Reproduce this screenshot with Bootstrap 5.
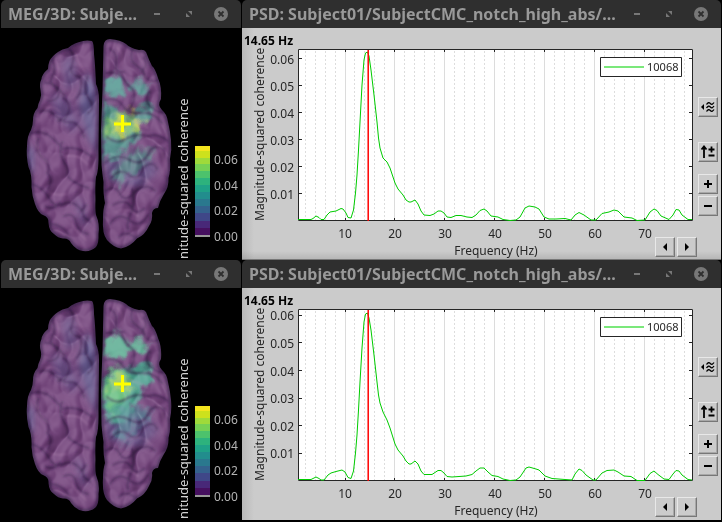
<!DOCTYPE html>
<html lang="en">
<head>
<meta charset="utf-8">
<meta name="viewport" content="width=device-width, initial-scale=1">
<title>Coherence results</title>
<link rel="stylesheet" href="https://cdn.jsdelivr.net/npm/bootstrap@5.3.0/dist/css/bootstrap.min.css">
<style>
body { background:#000; font-family:"Noto Sans","Open Sans",sans-serif; font-size:12px; line-height:16px; color:#262626; }
.desk { display:grid; grid-template-columns:240px minmax(0,1fr); column-gap:1px; padding:0 1px 2px; }
.win { min-height:260px; }
.titlebar { height:28px; background:#2f2f2f; border-radius:5px 5px 0 0; padding:0 4px 0 7px; }
.titlebar h2 { font-size:16px; line-height:28px; font-weight:700; color:#999; }
.winbtn { width:32px; height:28px; border:0; background:none; padding:0; }
.winbtn svg, .tool svg, .scene, .plot { display:block; }
.winbtn svg { margin:auto; }
.scene { width:100%; height:auto; background:#000; }
.psd { background:linear-gradient(90deg,#b8b8b8,#cbcbcb 12px); }
.psd-top { background-image:linear-gradient(0deg,rgba(0,0,0,.1),transparent 8px),linear-gradient(90deg,#b8b8b8,#cbcbcb 12px); border-bottom:1px solid #777; }
.freq { height:19px; line-height:16px; padding:5px 0 0 2px; font-weight:700; color:#000; }
.plot { width:100%; height:auto; overflow:visible; }
.plot text, .scene text { font-family:"Noto Sans","Open Sans",sans-serif; font-size:12px; }
.plot text { fill:#262626; }
.plot .key { font-size:11px; }
.scene text { fill:#b3b3b3; }
.scene .barname { font-size:13px; fill:#d0d0d0; }
.axisrow { padding-left:97px; padding-right:1px; gap:2px; height:22px; }
.axisname { padding-top:6px; }
.tools { width:23px; padding:69px 3px 0 0; gap:12px; }
.zoomers { gap:2px; }
.tools > .tool:first-child { margin-bottom:13px; }
.tool { width:20px; height:20px; padding:0; background:#cbcbcb; border:1px solid; border-color:#e8e8e8 #777 #777 #e8e8e8; box-shadow:inset -1px -1px #a8a8a8; display:flex; flex-shrink:0; align-items:center; justify-content:center; border-radius:0; }
</style>
<script src="https://cdn.jsdelivr.net/npm/bootstrap@5.3.0/dist/js/bootstrap.bundle.min.js"></script>
</head>
<body>
<svg width="0" height="0" class="position-absolute" aria-hidden="true">
<defs>
<symbol id="i-min" viewBox="0 0 16 16"><path d="M5 8h6" stroke="#777" stroke-width="2"/></symbol>
<symbol id="i-max" viewBox="0 0 16 16"><path d="M7 5h4v4zM5 7v4h4z" fill="#777"/></symbol>
<symbol id="i-close" viewBox="0 0 16 16"><circle cx="8" cy="8" r="7" fill="#777"/><path d="M5.500 5.500l5 5m0-5l-5 5" stroke="#2f2f2f" stroke-width="1.800"/></symbol>
<symbol id="i-smooth" viewBox="0 0 16 16"><path d="M4 5v6L1 8z"/><path d="M6.500 5.500q2-3 3.800-1T14 3.500M6.500 9q2-3 3.800-1T14 7M6.500 12.500q2-3 3.800-1T14 10.500" fill="none" stroke="#000" stroke-width="1.300"/></symbol>
<symbol id="i-scale" viewBox="0 0 16 16"><path d="M4 14V3M1.500 5.500L4 2.500l2.500 3M8.500 5.500h6M11.500 2.500v6M8.500 11.500h6" fill="none" stroke="#000" stroke-width="1.800"/></symbol>
<symbol id="i-plus" viewBox="0 0 16 16"><path d="M4 8h8M8 4v8" stroke="#000" stroke-width="2"/></symbol>
<symbol id="i-minus" viewBox="0 0 16 16"><path d="M4 8h8" stroke="#000" stroke-width="2"/></symbol>
<symbol id="i-prev" viewBox="0 0 16 16"><path d="M10 4v8L6 8z"/></symbol>
<symbol id="i-next" viewBox="0 0 16 16"><path d="M6 4v8l4-4z"/></symbol>

<path id="hemL" d="M92 41Q87 40 83 41Q78 42 75 43.500Q71 45 68 48Q62 49 58 52Q52 56 49.500 61Q48 65 48 69Q42 74 41.500 79Q39 84 40.500 90Q42 95 40 100Q38 104 37.500 108Q33 113 33 120Q33 125 31 130Q27 136 27 146Q26 156 28.500 167Q32 174 31.500 187Q32 196 35 204Q38 213 43 215Q49 217 48.500 223Q49 231 54 234Q58 238 63 238.500Q69 238 71 243Q76 250 83 251Q91 252 96 247Q99 243 98.500 234Q100 224 96 215Q95 209 95.500 200Q95 185 96 177Q99 171 98.500 150L99 100Q99 90 96 84Q95 62 94 54Q94 43 92 41Z"/>
<path id="hemR" d="M110 39Q104 39 103.500 46L102.500 90L101 130L101.500 165Q102 172 103.500 182Q103 194 105 203Q103 209 103 218Q102 234 107 240Q113 247 121 248.500Q130 247 137 238.500Q145 235 149 226Q153 220 152 213Q153 208 158 208Q160 200 164 194Q169 187 168.500 178Q171 170 170 159Q172 150 171 140Q170 130 168 122Q167 114 162 110Q157 105 161 99Q162 87 158 78Q155 68 152 66Q149 60 146 52Q144 49 139 50Q130 48 126 44Q121 40 110 39Z"/>
<clipPath id="brainClip"><use href="#hemL"/><use href="#hemR"/></clipPath>
<clipPath id="rightClip"><use href="#hemR"/></clipPath>
<filter id="soft1" x="-20%" y="-20%" width="140%" height="140%"><feGaussianBlur stdDeviation="1"/></filter>
<filter id="soft3" x="-20%" y="-20%" width="140%" height="140%"><feGaussianBlur stdDeviation="3"/></filter>
<filter id="patch" x="-20%" y="-20%" width="140%" height="140%"><feGaussianBlur stdDeviation="2.500" result="b"/><feTurbulence type="fractalNoise" baseFrequency="0.09" numOctaves="2" seed="4" result="n"/><feDisplacementMap in="b" in2="n" scale="18" xChannelSelector="R" yChannelSelector="G"/></filter>
<filter id="folds" x="0" y="0" width="100%" height="100%" color-interpolation-filters="sRGB"><feTurbulence type="turbulence" baseFrequency="0.036 0.026" numOctaves="2" seed="11"/><feGaussianBlur stdDeviation="1"/><feDiffuseLighting surfaceScale="12" diffuseConstant="0.950" lighting-color="#fff"><feDistantLight azimuth="225" elevation="62"/></feDiffuseLighting></filter>

<g id="brainBase">
  <rect x="20" y="34" width="160" height="222" fill="#6f4277"/>
  <g filter="url(#soft3)" fill="#5f598b">
    <path d="M86 72L96 84V155L86 132L78 104Z" opacity=".85"/>
    <path d="M52 92L68 100L80 124L72 133L54 114Z" opacity=".45"/>
    <path d="M26 143L33 150L33 173L28 170Z"/>
    <path d="M62 62L72 54L78 82L66 91Z" opacity=".5"/>
    <path d="M104 160L145 152L158 171L140 188L108 180Z" opacity=".6"/>
    <path d="M74 195L83 202L89 224L80 226Z" opacity=".35"/>
  </g>
</g>
<g id="brainShade">
  <g fill="none" stroke="#2e1740" stroke-width="2.200" stroke-linecap="round" filter="url(#soft1)" opacity=".55">
    <path d="M52 60Q57 70 52 77T58 88L64 95M69 49Q76 55 72 65T80 77Q84 87 77 98M45 83Q55 82 58 91T48 101M40 112Q48 108 56 116T73 122Q81 126 84 137M88 76Q82 90 89 99T88 113M63 98Q71 102 69 111T58 121M31 133Q43 130 51 137T63 149Q76 145 91 156M38 139Q34 151 43 158T47 173Q54 179 48 189M62 142Q58 154 64 162T68 177Q76 185 89 188M31 184Q43 187 49 198T66 203Q77 201 83 213M46 207Q54 210 60 203M64 216Q74 212 76 222T88 234M86 205Q78 216 90 221M52 224Q62 225 68 234"/>
    <path d="M110 49Q118 53 116 63T124 72M132 50Q129 61 137 66T145 77Q151 83 158 80M106 73Q118 71 123 78T134 91Q136 103 128 110M144 58Q148 66 142 72M150 91Q143 99 150 106T163 112M105 100Q118 97 123 106T143 113Q154 112 162 123M107 137Q117 145 126 139T148 136Q158 133 168 141M105 163Q117 152 130 160T150 150Q155 145 164 149M111 178Q120 167 129 175T144 167Q153 160 157 169M105 191Q115 184 120 194T137 190Q147 183 155 191M113 205Q126 198 131 207T144 209M110 224Q118 211 129 220T148 215M119 237Q127 230 134 237M132 189Q136 202 131 213T128 229"/>
  </g>
  <g fill="none" stroke="#b887b3" stroke-width="1.200" stroke-linecap="round" filter="url(#soft1)" opacity=".4">
    <path d="M56 62Q61 72 56 78M76 53Q78 63 85 72M45 108Q52 104 60 112M36 144Q40 157 48 163M65 157Q78 152 88 165M50 193Q58 196 67 194M72 224Q78 234 86 240M117 47Q124 54 122 64M140 58Q148 68 146 82M126 119Q140 122 148 128M125 181Q140 174 149 182M116 212Q127 206 138 216M157 144Q166 154 163 174"/>
  </g>
  <rect x="20" y="34" width="160" height="222" filter="url(#folds)" style="mix-blend-mode:soft-light" opacity=".45"/>
  <g fill="none" stroke="#28133a" stroke-width="5" opacity=".5" filter="url(#soft1)"><use href="#hemL"/><use href="#hemR"/></g>
</g>
<g id="cross"><path d="M114 124H131M122.500 115V132" fill="none" stroke="#ff0" stroke-width="3"/></g>
<g id="colorbar" shape-rendering="crispEdges">
  <path d="M195 146h15v5h-15z" fill="#f4e51e"/><path d="M195 151h15v7h-15z" fill="#cde11d"/><path d="M195 158h15v6h-15z" fill="#9fda3a"/><path d="M195 164h15v7h-15z" fill="#75d054"/><path d="M195 171h15v7h-15z" fill="#4cc26c"/><path d="M195 178h15v7h-15z" fill="#2db27d"/><path d="M195 185h15v7h-15z" fill="#1fa187"/><path d="M195 192h15v7h-15z" fill="#228d8d"/><path d="M195 199h15v7h-15z" fill="#2a788e"/><path d="M195 206h15v7h-15z" fill="#34618d"/><path d="M195 213h15v8h-15z" fill="#3f4788"/><path d="M195 221h15v7h-15z" fill="#482878"/><path d="M195 228h15v7h-15z" fill="#46105f"/><path d="M195 235h15v2h-15z" fill="#999"/>
</g>
<g id="grid" fill="none" stroke="#ddd">
  <path fill="#fff" stroke="none" d="M298 49h395v172H298z"/>
  <path stroke="#dcdcdc" d="M345.500 50V220M394.500 50V220M444.500 50V220M494.500 50V220M544.500 50V220M594.500 50V220M644.500 50V220"/>
  <path stroke-dasharray="2 2" d="M305.500 51V220M315.500 51V220M325.500 51V220M335.500 51V220M354.500 51V220M364.500 51V220M374.500 51V220M384.500 51V220M404.500 51V220M414.500 51V220M424.500 51V220M434.500 51V220M454.500 51V220M464.500 51V220M474.500 51V220M484.500 51V220M504.500 51V220M514.500 51V220M524.500 51V220M534.500 51V220M554.500 51V220M564.500 51V220M574.500 51V220M584.500 51V220M604.500 51V220M614.500 51V220M624.500 51V220M634.500 51V220M654.500 51V220M664.500 51V220M674.500 51V220M684.500 51V220"/>
  <path stroke="#262626" d="M298.500 49.500H692.500V220.500H298.500zM345.500 49v3m0 166v3M394.500 49v3m0 166v3M444.500 49v3m0 166v3M494.500 49v3m0 166v3M544.500 49v3m0 166v3M594.500 49v3m0 166v3M644.500 49v3m0 166v3"/>
</g>
</defs>
</svg>

<main class="desk">
  <section class="win" aria-label="MEG 3D view, first">
    <header class="titlebar d-flex align-items-center">
      <h2 class="m-0 flex-grow-1 text-nowrap">MEG/3D: Subje...</h2>
      <button class="winbtn" aria-label="Minimize"><svg width="16" height="16"><use href="#i-min"/></svg></button>
      <button class="winbtn" aria-label="Maximize"><svg width="16" height="16"><use href="#i-max"/></svg></button>
      <button class="winbtn" aria-label="Close"><svg width="16" height="16"><use href="#i-close"/></svg></button>
    </header>
    <svg class="scene" viewBox="1 28 240 232" role="img" aria-label="Cortex coherence map">
      <g clip-path="url(#brainClip)">
        <use href="#brainBase"/>
        <g clip-path="url(#rightClip)"><g filter="url(#patch)">
          <path fill="#51938d" d="M103 78L121 76L125 91L116 98L103 90Z"/>
          <path fill="#548d8c" d="M130 84L146 80L148 92L134 96Z"/>
          <path fill="#4f9a8d" d="M102 101L117 108L115 118L132 117L146 104L153 116L139 128L132 147L118 155L102 163Z" opacity=".85"/>
          <path fill="#559387" d="M122 158L149 148L154 160L136 168L120 188L113 177Z" opacity=".65"/>
          <path fill="#73b76f" d="M106 116L117 112L137 118L133 131L115 143L105 132Z" opacity=".85"/>
          <path fill="#c2cf4e" d="M113 120L121 117L125 127L119 134L113 131ZM134 121L140 119L142 126L134 131ZM129 111L138 108L134 115Z"/>
          <path fill="#d9d33a" d="M116 133L126 130L121 138Z"/>
        </g></g>
        <use href="#brainShade"/>
      </g>
      <use href="#cross"/><use href="#colorbar"/>
      <text class="barname" transform="translate(188 259) rotate(-90)">nitude-squared coherence</text>
      <text x="214" y="164">0.06</text><text x="214" y="190">0.04</text><text x="214" y="215">0.02</text><text x="214" y="241">0.00</text>
    </svg>
  </section>

  <section class="win d-flex flex-column" aria-label="PSD view, first">
    <header class="titlebar d-flex align-items-center">
      <h2 class="m-0 flex-grow-1 text-nowrap">PSD: Subject01/SubjectCMC_notch_high_abs/...</h2>
      <button class="winbtn" aria-label="Minimize"><svg width="16" height="16"><use href="#i-min"/></svg></button>
      <button class="winbtn" aria-label="Maximize"><svg width="16" height="16"><use href="#i-max"/></svg></button>
      <button class="winbtn" aria-label="Close"><svg width="16" height="16"><use href="#i-close"/></svg></button>
    </header>
    <div class="psd psd-top d-flex flex-grow-1">
      <div class="flex-grow-1">
        <div class="freq">14.65 Hz</div>
        <svg class="plot" viewBox="242 47 456 190" role="img" aria-label="Magnitude-squared coherence by frequency">
          <use href="#grid"/>
          <path stroke="#262626" d="M298 58.500h4m387 0h4M298 85.500h4m387 0h4M298 112.500h4m387 0h4M298 139.500h4m387 0h4M298 166.500h4m387 0h4M298 193.500h4m387 0h4"/>
          <polyline fill="none" stroke="#0c0" points="298,219.500 311,219.500 313,218.500 316,216 319,217.500 321,219.500 324,219.500 327,215 330,212 336,211 341,208.500 343,209 346,213 348,217.500 351,218 353.500,210 355.500,193 357,175 358.500,150 360,122 362,85 364,60 365.500,53 367.500,52 369,56 371,70 374,95 377,122 378.500,138 380,148 383,158 387,162 390,168 395,183 398,189 403,195 406,200 409,202 411,202 415,200 418,204 421,211 424,215 430,215.500 434,214 438,211 441,211 444,213 447,217 451,217.500 456,215.500 461,215.500 467,217 472,217.500 476,215 480,210.500 484,209 487,211 491,216 498,217 503,219.500 510,220.500 516,220 520,217 525,208 529,206 535,207 539,209 544,217 549,219 556,219 565,218.500 571,220 575,215 579,212.500 584,215 591,220 596,220 602,213.500 609,212 614,210 618,211 624,217 632,218 637,220.500 645,220 650,212 654,209 657,210.500 661,216 669,219.500 673,215 676,209.500 679,210 682,215 688,219.500 692,219.500"/>
          <path stroke="#f00" stroke-width="1.500" d="M368.200 50V221"/>
          <path fill="#fff" stroke="#262626" d="M600.500 57.500h81v19h-81z"/><path stroke="#4fe04f" stroke-width="1.500" d="M604 67h40"/>
          <text class="key" x="647" y="71">10068</text>
          <text transform="translate(264 221) rotate(-90)">Magnitude-squared coherence</text>
          <g text-anchor="end"><text x="294" y="64">0.06</text><text x="294" y="91">0.05</text><text x="294" y="118">0.04</text><text x="294" y="145">0.03</text><text x="294" y="172">0.02</text><text x="294" y="199">0.01</text></g>
          <g text-anchor="middle"><text x="345" y="238">10</text><text x="395" y="238">20</text><text x="445" y="238">30</text><text x="495" y="238">40</text><text x="545" y="238">50</text><text x="595" y="238">60</text><text x="645" y="238">70</text></g>
        </svg>
        <div class="axisrow d-flex">
          <div class="axisname flex-grow-1 text-center">Frequency (Hz)</div>
          <button class="tool" aria-label="Previous frequency"><svg width="16" height="16"><use href="#i-prev"/></svg></button>
          <button class="tool" aria-label="Next frequency"><svg width="16" height="16"><use href="#i-next"/></svg></button>
        </div>
      </div>
      <div class="tools d-flex flex-column">
        <button class="tool" aria-label="Smoothing"><svg width="16" height="16"><use href="#i-smooth"/></svg></button>
        <button class="tool" aria-label="Auto scale"><svg width="16" height="16"><use href="#i-scale"/></svg></button>
        <div class="zoomers d-flex flex-column">
          <button class="tool" aria-label="Increase scale"><svg width="16" height="16"><use href="#i-plus"/></svg></button>
          <button class="tool" aria-label="Decrease scale"><svg width="16" height="16"><use href="#i-minus"/></svg></button>
        </div>
      </div>
    </div>
  </section>

  <section class="win" aria-label="MEG 3D view, second">
    <header class="titlebar d-flex align-items-center">
      <h2 class="m-0 flex-grow-1 text-nowrap">MEG/3D: Subje...</h2>
      <button class="winbtn" aria-label="Minimize"><svg width="16" height="16"><use href="#i-min"/></svg></button>
      <button class="winbtn" aria-label="Maximize"><svg width="16" height="16"><use href="#i-max"/></svg></button>
      <button class="winbtn" aria-label="Close"><svg width="16" height="16"><use href="#i-close"/></svg></button>
    </header>
    <svg class="scene" viewBox="1 28 240 232" role="img" aria-label="Cortex coherence map">
      <g clip-path="url(#brainClip)">
        <use href="#brainBase"/>
        <g clip-path="url(#rightClip)"><g filter="url(#patch)">
          <path fill="#5aa98e" d="M103 78L118 73L128 82L146 80L147 91L126 92L120 99L103 95Z"/>
          <path fill="#519e8f" d="M103 116L116 106L128 110L146 104L154 124L139 131L133 152L123 164L111 160L102 150Z"/>
          <path fill="#67bd80" d="M104 128L112 108L121 107L132 125L126 139L109 153Z"/>
          <path fill="#99c767" d="M110 119L119 110L125 120L132 126L119 133L111 128Z"/>
          <path fill="#538993" d="M118 150L147 148L152 164L136 162L126 188L116 178Z" opacity=".65"/>
        </g></g>
        <use href="#brainShade"/>
      </g>
      <use href="#cross"/><use href="#colorbar"/>
      <text class="barname" transform="translate(188 259) rotate(-90)">nitude-squared coherence</text>
      <text x="214" y="164">0.06</text><text x="214" y="190">0.04</text><text x="214" y="215">0.02</text><text x="214" y="241">0.00</text>
    </svg>
  </section>

  <section class="win d-flex flex-column" aria-label="PSD view, second">
    <header class="titlebar d-flex align-items-center">
      <h2 class="m-0 flex-grow-1 text-nowrap">PSD: Subject01/SubjectCMC_notch_high_abs/...</h2>
      <button class="winbtn" aria-label="Minimize"><svg width="16" height="16"><use href="#i-min"/></svg></button>
      <button class="winbtn" aria-label="Maximize"><svg width="16" height="16"><use href="#i-max"/></svg></button>
      <button class="winbtn" aria-label="Close"><svg width="16" height="16"><use href="#i-close"/></svg></button>
    </header>
    <div class="psd d-flex flex-grow-1">
      <div class="flex-grow-1">
        <div class="freq">14.65 Hz</div>
        <svg class="plot" viewBox="242 47 456 190" role="img" aria-label="Magnitude-squared coherence by frequency">
          <use href="#grid"/>
          <path stroke="#262626" d="M298 55.500h4m387 0h4M298 82.500h4m387 0h4M298 110.500h4m387 0h4M298 138.500h4m387 0h4M298 165.500h4m387 0h4M298 193.500h4m387 0h4"/>
          <polyline fill="none" stroke="#0c0" points="298,219.500 311,219.500 313,218.500 316,217 319,218.500 321,220 324,220 328,215 331,213 336,211.500 342,210 345,212 348,217.500 351,218.500 353.500,211 355.500,193 357,175 358.500,150 360,122 362,88 364,62 365.500,54 367.500,53 369,58 371,70 374,95 377,122 378.500,135 380,143 383,152 387,160 390,168 395,184 398,190 403,196 406,201 409,204 411,204 415,201 418,204 421,211 424,214.500 432,214.500 438,210.500 441,210.500 444,213 447,216.500 452,217 466,216 472,214.500 476,211 480,208 484,208 488,212 492,215.500 498,216.500 503,219 510,220.500 516,220 520,217 526,208 529,207 536,209 539,210 545,216 552,218.500 565,219.500 572,220 575,214 579,209 582,210.500 586,215 593,220 596,220 602,213 607,210.500 614,210 618,212 624,216 631,216.500 637,220.500 645,220.500 650,213.500 654,211 658,214.500 664,219 669,219.500 673,214 676,210.500 679,211 682,215 688,219.500 692,220"/>
          <path stroke="#f00" stroke-width="1.500" d="M368.200 50V221"/>
          <path fill="#fff" stroke="#262626" d="M600.500 57.500h81v19h-81z"/><path stroke="#4fe04f" stroke-width="1.500" d="M604 67h40"/>
          <text class="key" x="647" y="71">10068</text>
          <text transform="translate(264 221) rotate(-90)">Magnitude-squared coherence</text>
          <g text-anchor="end"><text x="294" y="60">0.06</text><text x="294" y="88">0.05</text><text x="294" y="116">0.04</text><text x="294" y="143">0.03</text><text x="294" y="171">0.02</text><text x="294" y="198">0.01</text></g>
          <g text-anchor="middle"><text x="345" y="238">10</text><text x="395" y="238">20</text><text x="445" y="238">30</text><text x="495" y="238">40</text><text x="545" y="238">50</text><text x="595" y="238">60</text><text x="645" y="238">70</text></g>
        </svg>
        <div class="axisrow d-flex">
          <div class="axisname flex-grow-1 text-center">Frequency (Hz)</div>
          <button class="tool" aria-label="Previous frequency"><svg width="16" height="16"><use href="#i-prev"/></svg></button>
          <button class="tool" aria-label="Next frequency"><svg width="16" height="16"><use href="#i-next"/></svg></button>
        </div>
      </div>
      <div class="tools d-flex flex-column">
        <button class="tool" aria-label="Smoothing"><svg width="16" height="16"><use href="#i-smooth"/></svg></button>
        <button class="tool" aria-label="Auto scale"><svg width="16" height="16"><use href="#i-scale"/></svg></button>
        <div class="zoomers d-flex flex-column">
          <button class="tool" aria-label="Increase scale"><svg width="16" height="16"><use href="#i-plus"/></svg></button>
          <button class="tool" aria-label="Decrease scale"><svg width="16" height="16"><use href="#i-minus"/></svg></button>
        </div>
      </div>
    </div>
  </section>
</main>
</body>
</html>
